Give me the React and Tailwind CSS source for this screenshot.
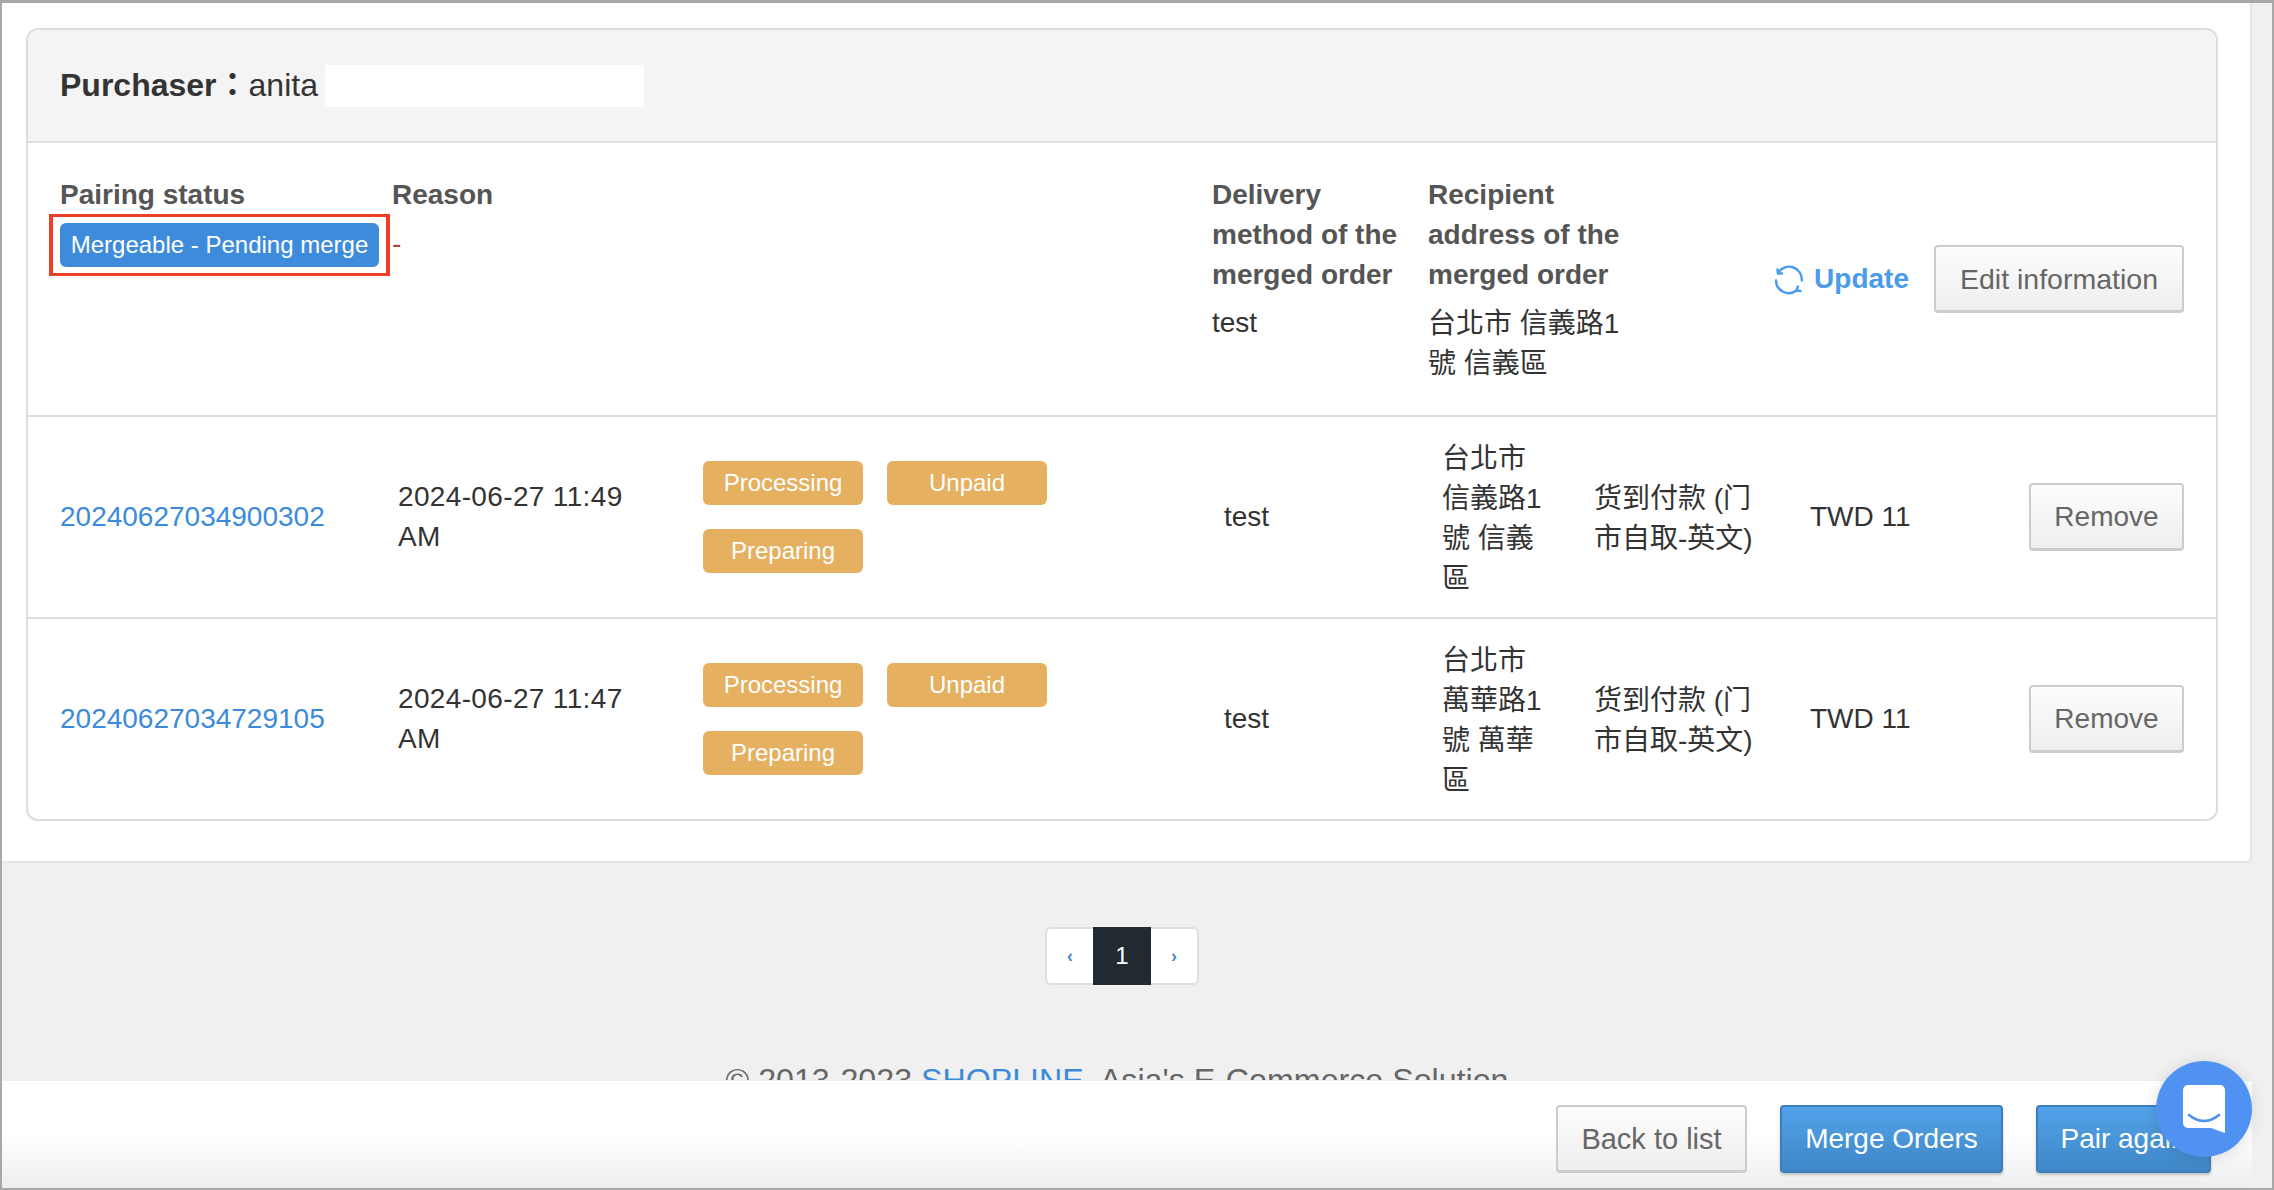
import React from "react";

const Tag = ({ children }) => (
  <span className="flex h-[44px] w-[160px] items-center justify-center rounded-[6px] bg-[#e5b060] text-[24px] leading-[40px] text-white">
    {children}
  </span>
);

const GrayBtn = ({ children, className }) => (
  <button className={"flex h-[68px] items-center justify-center rounded-[4px] border-2 border-[#cccccc] border-b-[3px] bg-gradient-to-b from-[#fdfdfd] to-[#eeeeee] text-[#666666] " + className}>
    {children}
  </button>
);

const BlueBtn = ({ children, className }) => (
  <button className={"flex h-[68px] items-center justify-center rounded-[4px] border-2 border-[#3b7fba] bg-gradient-to-b from-[#52a2ea] to-[#3f87c6] text-white shadow-[0_2px_3px_rgba(0,0,0,0.2)] " + className}>
    {children}
  </button>
);

const Row = ({ id, date, addr, last }) => (
  <div className={"flex items-center pl-[32px] pr-[32px] " + (last ? "h-[200px]" : "h-[202px] border-b-2 border-[#dddddd]")}>
    <a className="w-[338px] text-[#3c8bdb]">{id}</a>
    <div className="w-[305px] pr-[50px] tracking-[0.35px] text-[#333333]">{date}</div>
    <div className="flex w-[521px] flex-wrap gap-x-[24px] gap-y-[24px] pr-[177px]">
      <Tag>Processing</Tag>
      <Tag>Unpaid</Tag>
      <Tag>Preparing</Tag>
    </div>
    <div className="w-[218px] text-[#333333]">test</div>
    <div className="w-[152px] pr-[44px] pt-[3px] text-[#333333]">{addr}</div>
    <div className="w-[216px] pr-[40px] pt-[3px] text-[#333333]">货到付款 (门市自取-英文)</div>
    <div className="text-[#333333]">TWD 11</div>
    <GrayBtn className="ml-auto w-[155px]">Remove</GrayBtn>
  </div>
);

export default function App() {
  return (
    <div className="relative h-[1190px] w-[2274px] overflow-hidden border-2 border-t-[3px] border-[#a8a8a8] bg-[#f0f0f0] font-['Liberation_Sans','Noto_Sans_CJK_TC',sans-serif] text-[28px] leading-[40px]">
      <div className="w-[2250px] rounded-br-[6px] border-r-2 border-b-2 border-[#e5e5e5] bg-white pb-[40px] pl-[24px] pr-[32px] pt-[25px]">
        <div className="rounded-[12px] border-2 border-[#dddddd]">
          <div className="flex h-[113px] items-center rounded-t-[10px] border-b-2 border-[#dddddd] bg-[#f4f4f4] pb-[2px] pl-[32px] text-[32px] text-[#333333]">
            <b>Purchaser：</b>
            <span>anita</span>
            <div className="ml-[7px] mt-[2px] h-[42px] w-[319px] bg-white" />
          </div>
          <div className="flex h-[274px] border-b-2 border-[#dddddd] pl-[32px] pr-[32px] pt-[32px]">
            <div className="w-[332px]">
              <div className="font-bold text-[#555555]">Pairing status</div>
              <div className="mt-[-1px] w-[341px] -translate-x-[11px] border-x-4 border-y-[3px] border-[#ed3f23] px-[7px] py-[6px]">
                <div className="flex h-[44px] w-[319px] items-center justify-center rounded-[6px] bg-[#3e8bdc] text-[24px] text-white">
                  Mergeable - Pending merge
                </div>
              </div>
            </div>
            <div className="w-[820px]">
              <div className="font-bold text-[#555555]">Reason</div>
              <div className="mt-[9px] text-[#a94442]">-</div>
            </div>
            <div className="w-[216px]">
              <div className="w-[200px] font-bold text-[#555555]">Delivery method of the merged order</div>
              <div className="mt-[8px] text-[#333333]">test</div>
            </div>
            <div className="w-[200px]">
              <div className="w-[200px] font-bold text-[#555555]">Recipient address of the merged order</div>
              <div className="mt-[9px] text-[#333333]">台北市 信義路1號 信義區</div>
            </div>
            <div className="ml-auto mt-[-1px] flex h-[210px] items-center self-start">
              <svg className="mt-[1px]" width="30" height="30" viewBox="0 0 30 30" fill="none" stroke="#4a9be8" strokeWidth="2.4" strokeLinecap="round" strokeLinejoin="round">
                <path d="M4 8 A12.8 12.8 0 0 1 27.8 15.5" />
                <path d="M22.5 25.5 A12.8 12.8 0 0 1 2 15.5" />
                <path d="M3.5 4.5 L4 8.5 L8 8.5" />
                <path d="M26.5 26 L22.5 25.5 L24 21.5" />
              </svg>
              <span className="ml-[10px] font-bold text-[#4a9be8]">Update</span>
              <GrayBtn className="ml-[25px] w-[250px] text-[28.5px]">Edit information</GrayBtn>
            </div>
          </div>
          <Row id="20240627034900302" date="2024-06-27 11:49 AM" addr="台北市 信義路1號 信義區" />
          <Row id="20240627034729105" date="2024-06-27 11:47 AM" addr="台北市 萬華路1號 萬華區" last />
        </div>
      </div>

      <div className="mt-[64px] flex w-[2240px] justify-center">
        <div className="flex h-[58px] w-[154px] items-stretch overflow-visible rounded-[6px] border-2 border-[#dfdfdf] bg-white">
          <span className="flex flex-1 items-center justify-center text-[18px] font-bold text-[#4b87c9]">‹</span>
          <span className="-my-[2px] flex w-[58px] items-center justify-center bg-[#212931] text-[24px] text-white">1</span>
          <span className="flex flex-1 items-center justify-center text-[18px] font-bold text-[#4b87c9]">›</span>
        </div>
      </div>

      <div className="mt-[75px] w-[2230px] text-center text-[32.2px] text-[#666666]">
        © 2013-2023 <a className="text-[#3c8bdb]">SHOPLINE</a>, Asia's E-Commerce Solution
      </div>

      <div className="absolute bottom-0 left-0 flex h-[108px] w-[2250px] items-start justify-end gap-[33px] overflow-hidden border-t border-[#eeeeee] bg-gradient-to-b from-white from-50% to-[#eeeeee] pr-[41px] pt-[24px]">
        <GrayBtn className="w-[191px] text-[29px]">Back to list</GrayBtn>
        <BlueBtn className="w-[223px]">Merge Orders</BlueBtn>
        <BlueBtn className="w-[175px]">
          Pair again
        </BlueBtn>
      </div>

      <div className="absolute left-[2154px] top-[1058px] flex h-[96px] w-[96px] items-center justify-center rounded-full bg-[#4f92f2] shadow-[0_2px_16px_rgba(0,0,0,0.12)]">
        <svg width="42" height="48" viewBox="0 0 42 48">
          <path d="M5 0H37a5 5 0 0 1 5 5V48L28 43H5a5 5 0 0 1-5-5V5a5 5 0 0 1 5-5z" fill="#ffffff" />
          <path d="M6 30Q21 42 36 30" fill="none" stroke="#4f92f2" strokeWidth="2.6" strokeLinecap="round" />
        </svg>
      </div>
    </div>
  );
}
